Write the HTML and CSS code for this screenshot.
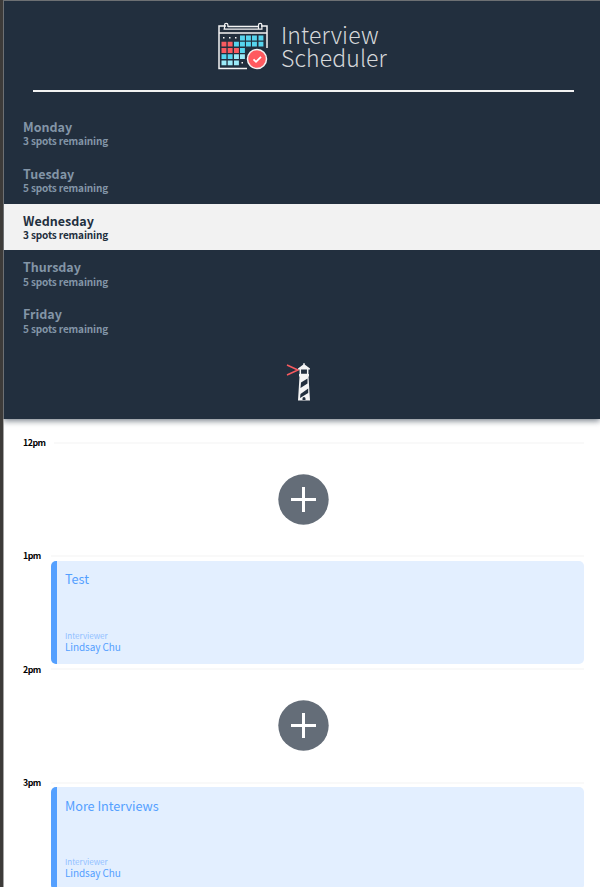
FILE: index.html
```html
<!DOCTYPE html>
<html lang="en">
<head>
<meta charset="utf-8">
<title>Interview Scheduler</title>
<link rel="stylesheet" href="styles.css">
</head>
<body>
<main class="layout">
  <section class="sidebar">
    <div class="brand">
      <svg class="brand-icon" width="52" height="50" viewBox="0 0 52 50">
        <path d="M11 4.5H42M9 4H2V46.500H30M44 4H50V26M2 11H50" fill="none" stroke="#f4f4f4" stroke-width="1.5"/>
        <path d="M7.5 7V3a1.7 1.7 0 0 1 3.4 0V5M41.5 7V3a1.7 1.7 0 0 1 3.4 0V7M6.500 7.200H45.500" fill="none" stroke="#f4f4f4" stroke-width="1.2"/>
        <g fill="#f4f4f4"><path d="M6 15h1.500v1.500H6zM12 15h1.500v1.500H12zM18 15h1.500v1.500H18zM24.500 40h1.500v1.500H24.500z"/></g>
        <g fill="#56d5ee"><path d="M23 13.500h4.900v4.900H23zM29 13.500h4.900v4.900H29zM35 13.500h4.900v4.900H35zM41.500 13.500h4.900v4.900H41.500zM17 19.700h4.900v4.900H17zM23 19.700h4.900v4.900H23zM29 19.700h4.900v4.900H29zM35 19.700h4.900v4.900H35zM41.500 19.700h4.900v4.900H41.500zM23 26h4.900v4.900H23zM4.500 32.200h4.900v4.900H4.500zM10.700 32.200h4.900v4.900H10.700z"/></g>
        <g fill="#9cebf8"><path d="M17 32.200h4.900v4.900H17zM23 32.200h4.900v4.900H23zM4.500 38.400h4.900v4.900H4.500zM10.700 38.400h4.900v4.900H10.700zM17 38.400h4.900v4.900H17z"/></g>
        <g fill="#f95b60"><path d="M4.500 19.700h4.900v4.900H4.500zM10.700 19.700h4.900v4.900H10.700zM4.500 26h4.900v4.900H4.500zM10.700 26h4.900v4.900H10.700zM17 26h4.900v4.900H17z"/></g>
        <circle cx="40" cy="37" r="11.500" fill="#222f3e"/>
        <circle cx="40" cy="37" r="9.500" fill="#ff5a5f" stroke="#f4f4f4" stroke-width="1.500"/>
        <path d="M36.500 37.300l2.500 2.500 5-5" fill="none" stroke="#fff" stroke-width="1.800"/>
      </svg>
      <h1 class="brand-name">Interview<br>Scheduler</h1>
    </div>
    <hr class="divider">
    <ul class="days">
      <li class="day"><h2>Monday</h2><p>3 spots remaining</p></li>
      <li class="day"><h2>Tuesday</h2><p>5 spots remaining</p></li>
      <li class="day selected"><h2>Wednesday</h2><p>3 spots remaining</p></li>
      <li class="day"><h2>Thursday</h2><p>5 spots remaining</p></li>
      <li class="day"><h2>Friday</h2><p>5 spots remaining</p></li>
    </ul>
    <svg class="lighthouse" width="26" height="40" viewBox="0 0 26 40">
      <path d="M1 3L12 8L1 13" fill="none" stroke="#f95b60" stroke-width="1.500"/>
      <path d="M12 6.500L18 2L24 6.500V7.500H12z" fill="#f4f4f4"/>
      <path d="M18 1V4" stroke="#f4f4f4" stroke-width="1.200"/>
      <path d="M14.300 7V12.500H21.700V7" fill="none" stroke="#f4f4f4" stroke-width="1.500"/>
      <path d="M13 12h10v2.500h-.500L24 38.500H12L13.500 14.500H13z" fill="#f4f4f4"/>
      <path d="M15 20.500L21.500 16.500V21.500L14.500 26zM14.500 32L22.200 26.500V31L14 36zM16.500 38V36.500a1.500 1.500 0 0 1 3 0v1.500z" fill="#222f3e"/>
    </svg>
  </section>
  <section class="schedule">
    <article class="slot">
      <header class="time"><h4>12pm</h4><hr></header>
      <div class="empty"><svg width="51" height="51" viewBox="0 0 51 51"><circle cx="25.500" cy="25.500" r="25.200" fill="#646d78"/><path d="M13 25.500H38M25.500 13V38" stroke="#fff" stroke-width="3"/></svg></div>
    </article>
    <article class="slot">
      <header class="time"><h4>1pm</h4><hr></header>
      <div class="card"><h2>Test</h2><div><h5>Interviewer</h5><h3>Lindsay Chu</h3></div></div>
    </article>
    <article class="slot">
      <header class="time"><h4>2pm</h4><hr></header>
      <div class="empty"><svg width="51" height="51" viewBox="0 0 51 51"><circle cx="25.500" cy="25.500" r="25.200" fill="#646d78"/><path d="M13 25.500H38M25.500 13V38" stroke="#fff" stroke-width="3"/></svg></div>
    </article>
    <article class="slot">
      <header class="time"><h4>3pm</h4><hr></header>
      <div class="card"><h2>More Interviews</h2><div><h5>Interviewer</h5><h3>Lindsay Chu</h3></div></div>
    </article>
  </section>
</main>
</body>
</html>
```
FILE: styles.css
```css
* { box-sizing: border-box; margin: 0; padding: 0; }
body { height: 887px; overflow: hidden; background: #fff; font-family: "Noto Sans CJK SC", "Noto Sans", sans-serif; }
.layout { height: 887px; overflow: hidden; border-left: 3px solid #3d3b39; display: flex; flex-direction: column; }
.sidebar { height: 419px; flex: none; border-top: 1px solid #6d7073; border-left: 1px solid #6d7073; background: #222f3e; box-shadow: 0 2px 6px rgba(34, 47, 62, .6); display: flex; flex-direction: column; align-items: center; }
.brand { display: flex; align-items: flex-start; height: 89px; padding-top: 21px; gap: 12px; }
.brand-name { color: #d6d8da; font-size: 23px; font-weight: 300; line-height: 23px; padding-top: 1px; letter-spacing: .12px; }
.divider { width: 541px; height: 2px; margin-left: 2px; border: 0; background: #f2f2f2; }
.days { list-style: none; width: 100%; margin-top: 18px; }
.day { height: 46.8px; padding: 9px 19px 0; color: #8395a7; }
.day h2 { font-size: 12.5px; line-height: 15px; font-weight: 700; }
.day p { font-size: 10px; line-height: 13px; font-weight: 700; letter-spacing: -.13px; }
.day.selected { background: #f2f2f2; color: #222f3e; }
.day.selected ~ .day p { padding-top: 1px; }
.lighthouse { margin-top: 18px; margin-right: 7px; }
.schedule { flex: 1; border-left: 1px solid #a5a5a5; padding: 17px 16px 0 19px; }
.slot { height: 113.2px; }
.time { display: flex; align-items: center; height: 14px; }
.time h4 { width: 28px; font-size: 8.8px; line-height: 14px; font-weight: 700; letter-spacing: -.5px; }
.slot:first-child h4 { width: 31px; }
.slot:nth-child(3) h4 { padding-top: 2px; }
.time hr { flex: 1; border: 0; height: 2px; background: #f9f9f9; }
.empty { height: 99px; margin-left: 28px; padding-top: 24px; padding-right: 28px; display: flex; justify-content: center; }
.card { height: 103px; margin: -2.2px 0 0 28px; border-left: 6px solid #54a0ff; border-radius: 5px; background: #e3efff; padding: 8.4px 8px 11px; display: flex; flex-direction: column; justify-content: space-between; color: #54a0ff; }
.card h2 { font-size: 12.7px; line-height: 19px; font-weight: 400; letter-spacing: -.05px; }
.card h5 { font-size: 8px; line-height: 11px; font-weight: 400; color: #90c0ff; }
.card h3 { font-size: 10px; line-height: 12px; font-weight: 400; letter-spacing: -.1px; }
```
